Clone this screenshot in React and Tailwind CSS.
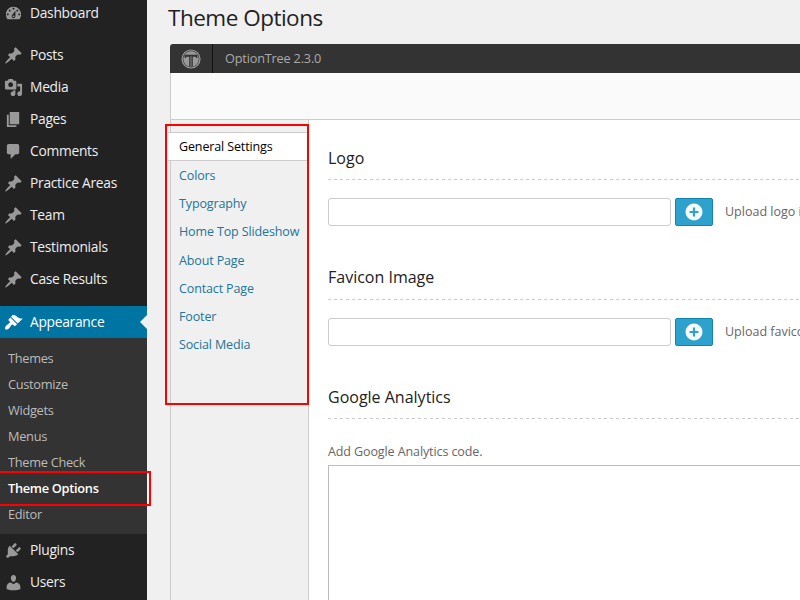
const ICONS = {
  dashboard:
    'M3.76 16h12.48c1.1-1.37 1.76-3.11 1.76-5 0-4.42-3.58-8-8-8s-8 3.58-8 8c0 1.89.66 3.63 1.76 5zM10 4c.55 0 1 .45 1 1s-.45 1-1 1-1-.45-1-1 .45-1 1-1zM6 6c.55 0 1 .45 1 1s-.45 1-1 1-1-.45-1-1 .45-1 1-1zm8 0c.55 0 1 .45 1 1s-.45 1-1 1-1-.45-1-1 .45-1 1-1zm-5.37 5.55L12 7v6c0 1.1-.9 2-2 2s-2-.9-2-2c0-.57.24-1.08.63-1.45zM4 10c.55 0 1 .45 1 1s-.45 1-1 1-1-.45-1-1 .45-1 1-1zm12 0c.55 0 1 .45 1 1s-.45 1-1 1-1-.45-1-1 .45-1 1-1zm-5 3c0-.55-.45-1-1-1s-1 .45-1 1 .45 1 1 1 1-.45 1-1z',
  pin: 'M10.44 3.02l1.82-1.82 6.36 6.35-1.83 1.82c-1.05-.68-2.48-.57-3.41.36l-.75.75c-.92.93-1.04 2.35-.35 3.41l-1.83 1.82-2.41-2.41-2.8 2.79c-.42.42-3.38 2.71-3.8 2.29s1.86-3.39 2.28-3.81l2.79-2.79L4.1 9.36l1.83-1.82c1.05.69 2.48.57 3.4-.36l.75-.75c.93-.92 1.05-2.35.36-3.41z',
  media:
    'M13 11V4c0-.55-.45-1-1-1h-1.67L9 1H5L3.67 3H2c-.55 0-1 .45-1 1v7c0 .55.45 1 1 1h10c.55 0 1-.45 1-1zM7 4.5c1.38 0 2.5 1.12 2.5 2.5S8.38 9.5 7 9.5 4.5 8.38 4.5 7 5.62 4.5 7 4.5zM14 6h5v10.5c0 1.38-1.12 2.5-2.5 2.5S14 17.88 14 16.5s1.12-2.5 2.5-2.5c.17 0 .34.02.5.05V9h-3V6zm-4 8.05V13h2v3.5c0 1.38-1.12 2.5-2.5 2.5S7 17.88 7 16.5 8.12 14 9.5 14c.17 0 .34.02.5.05z',
  page: 'M6 15V2h10v13H6zm-1 1h8v2H3V5h2v11z',
  comment:
    'M5 2h9c1.1 0 2 .9 2 2v7c0 1.1-.9 2-2 2h-2l-5 5v-5H5c-1.1 0-2-.9-2-2V4c0-1.1.9-2 2-2z',
  brush:
    'M14.48 11.06L7.41 3.99l1.5-1.5c.5-.56 2.3-.47 3.51.32 1.21.8 1.43 1.28 2.91 2.1 1.18.64 2.45 1.26 4.45.85zm-.71.71L6.7 4.7 4.93 6.47c-.39.39-.39 1.02 0 1.41l1.06 1.06c.39.39.39 1.03 0 1.42-.6.6-1.43 1.11-2.21 1.69-.35.26-.7.53-1.01.84C1.43 14.23.4 16.08 1.4 17.07c.99 1 2.84-.03 4.18-1.36.31-.31.58-.66.85-1.02.57-.78 1.08-1.61 1.69-2.21.39-.39 1.02-.39 1.41 0l1.06 1.06c.39.39 1.02.39 1.41 0z',
  plug: 'M13.11 4.36L9.87 7.6 8 5.73l3.24-3.24c.35-.34 1.05-.2 1.56.32.52.51.66 1.21.31 1.55zm-8 1.77l.91-1.12 9.01 9.01-1.19.84c-.71.71-2.63 1.16-3.82 1.16H6.14L4.9 17.26c-.59.59-1.54.59-2.12 0-.59-.58-.59-1.53 0-2.12l1.24-1.24v-3.88c0-1.13.4-3.19 1.09-3.89zm7.26 3.97l3.24-3.24c.34-.35 1.04-.21 1.55.31.52.51.66 1.21.31 1.55l-3.24 3.25z',
  user: 'M10 9.25c-2.27 0-2.73-3.44-2.73-3.44C7 4.02 7.82 2 9.97 2c2.16 0 2.98 2.02 2.71 3.81 0 0-.41 3.44-2.68 3.44zm0 2.57L12.72 10c2.39 0 4.52 2.33 4.52 4.53v2.49s-3.65 1.13-7.24 1.13c-3.65 0-7.24-1.13-7.24-1.13v-2.49c0-2.25 1.94-4.48 4.47-4.48z',
};

const CONTENT_ITEMS = [
  ['Posts', 'pin'],
  ['Media', 'media'],
  ['Pages', 'page'],
  ['Comments', 'comment'],
  ['Practice Areas', 'pin'],
  ['Team', 'pin'],
  ['Testimonials', 'pin'],
  ['Case Results', 'pin'],
];

const SUBMENU = ['Themes', 'Customize', 'Widgets', 'Menus', 'Theme Check', 'Theme Options', 'Editor'];

const TABS = [
  'General Settings',
  'Colors',
  'Typography',
  'Home Top Slideshow',
  'About Page',
  'Contact Page',
  'Footer',
  'Social Media',
];

function MenuItem({ label, icon, active, raised }) {
  return (
    <a
      className={`flex h-8 shrink-0 items-center gap-[7px] pl-1 text-[13.8px] tracking-[-0.28px] ${
        active ? 'bg-[#0074a2] text-white' : 'text-[#eee]'
      }`}
    >
      <svg
        viewBox="0 0 20 20"
        className={`size-[19px] shrink-0 ${raised ? 'mt-px' : 'mt-0.5'} ${
          active ? 'fill-white' : 'fill-[#999]'
        }`}
      >
        <path d={ICONS[icon]} />
      </svg>
      <span className={`whitespace-nowrap ${raised ? '' : 'pt-px'}`}>{label}</span>
      {active && (
        <svg viewBox="0 0 8 16" className="ml-auto h-4 w-[7px] fill-[#f0f0f0]">
          <path d="M8 0v16L0 8z" />
        </svg>
      )}
    </a>
  );
}

function Sidebar() {
  return (
    <nav className="relative flex w-[147px] shrink-0 flex-col bg-[#222]">
      <div className="-mt-[3px] mb-[10px]">
        <MenuItem label="Dashboard" icon="dashboard" raised />
      </div>
      {CONTENT_ITEMS.map(([label, icon]) => (
        <MenuItem key={label} label={label} icon={icon} raised />
      ))}
      <div className="h-[10.5px] shrink-0" />
      <MenuItem label="Appearance" icon="brush" active />
      <ul className="h-[196px] shrink-0 bg-[#333] pt-2 text-[12.8px] tracking-[-0.3px] text-[#bbb]">
        {SUBMENU.map((label) => (
          <li
            key={label}
            className={`flex h-[26px] items-center pl-2 ${
              label === 'Theme Options' ? 'font-semibold text-white' : ''
            }`}
          >
            {label}
          </li>
        ))}
      </ul>
      <MenuItem label="Plugins" icon="plug" />
      <MenuItem label="Users" icon="user" />
      <div className="absolute top-[471px] -left-1 h-[35px] w-[155px] border-2 border-[#f00]" />
    </nav>
  );
}

function Logo() {
  return (
    <svg viewBox="0 0 20 20" className="size-5">
      <circle cx="10" cy="10" r="9" fill="#444" stroke="#999" strokeWidth="1.2" />
      <circle cx="10" cy="10" r="7.700" fill="#999" />
      <path
        d="M3.6 5.800h12.800v3.200h-1.100c-.3-.9-.8-1.200-1.900-1.200h-1.600v9.700H8.200V7.800H6.600c-1.100 0-1.600.3-1.900 1.200H3.600z"
        fill="#333"
      />
      <path d="M9.500 7.200h1V17h-1z" fill="#888" />
    </svg>
  );
}

function Dashes() {
  return (
    <div className="h-px bg-[repeating-linear-gradient(90deg,#ccc_0_3px,transparent_3px_6px)]" />
  );
}

function UploadSetting({ title, hint }) {
  return (
    <section className="h-[119.5px] shrink-0">
      <h3 className="flex h-[42px] items-center pb-px text-[16px] text-[#222]">{title}</h3>
      <Dashes />
      <div className="mt-[18px] flex items-center">
        <input className="h-7 w-[343px] shrink-0 rounded-[3px] border border-[#ccc] bg-white" />
        <button className="ml-1 flex h-7 w-[38px] shrink-0 items-center justify-center rounded-[2px] border border-[#0f86b2] bg-[#2ea2cc]">
          <svg viewBox="0 0 18 18" className="size-[18px]">
            <circle cx="9" cy="9" r="8.500" fill="#f6fbfd" />
            <path d="M9 4.500v9M4.500 9h9" stroke="#2ea2cc" strokeWidth="2.200" />
          </svg>
        </button>
        <span className="ml-3 pt-px text-[12.500px] whitespace-nowrap text-[#666]">{hint}</span>
      </div>
    </section>
  );
}

export default function App() {
  return (
    <div className="flex h-[600px] w-[800px] overflow-hidden bg-[#f0f0f0] font-['Open_Sans',sans-serif]">
      <Sidebar />
      <main className="flex min-w-0 flex-1 flex-col pl-[22px]">
        <h1 className="-ml-px flex h-9 shrink-0 items-center text-[22.500px] tracking-[-0.5px] whitespace-nowrap text-[#222]">
          Theme Options
        </h1>
        <div className="relative mt-2 flex min-h-0 flex-1 flex-col pl-px">
          <header className="flex h-[29px] shrink-0 items-center rounded-tl-[3px] bg-[#333] text-[12.700px] tracking-[-0.17px] text-[#aaa]">
            <div className="flex h-full w-[43px] items-center justify-center border-r border-[#111]">
              <Logo />
            </div>
            <span className="pt-px pl-3">OptionTree 2.3.0</span>
          </header>
          <div className="flex min-h-0 flex-1 flex-col border-l border-[#ccc]">
            <div className="h-[47px] shrink-0 border-b border-[#ccc] bg-[#fafafa]" />
            <div className="flex min-h-0 flex-1">
              <ul className="w-[138px] shrink-0 border-r border-[#ccc] pt-3 text-[12.500px] tracking-[-0.13px] text-[#21759b]">
                {TABS.map((tab, i) => (
                  <li
                    key={tab}
                    className={
                      i === 0
                        ? '-ml-[3px] flex h-[29px] items-center border-y border-[#ccc] bg-white pt-px pl-[11px] whitespace-nowrap text-black'
                        : 'flex h-[28.300px] items-center pt-[1.8px] pl-2 whitespace-nowrap'
                    }
                  >
                    {tab}
                  </li>
                ))}
              </ul>
              <div className="flex min-w-0 flex-1 flex-col bg-white pt-[17px] pl-[19px]">
                <UploadSetting title="Logo" hint="Upload logo image" />
                <UploadSetting title="Favicon Image" hint="Upload favicon image" />
                <h3 className="flex h-[42px] shrink-0 items-center text-[16px] text-[#222]">
                  Google Analytics
                </h3>
                <Dashes />
                <p className="mt-[23px] text-[12.500px] leading-5 tracking-[-0.1px] text-[#666]">
                  Add Google Analytics code.
                </p>
                <div className="mt-[3px] w-[600px] flex-1 border-t border-l border-[#bbb] bg-white" />
              </div>
            </div>
          </div>
          <div className="absolute top-20 -left-1 h-[281px] w-36 border-2 border-[#f00]" />
        </div>
      </main>
    </div>
  );
}
